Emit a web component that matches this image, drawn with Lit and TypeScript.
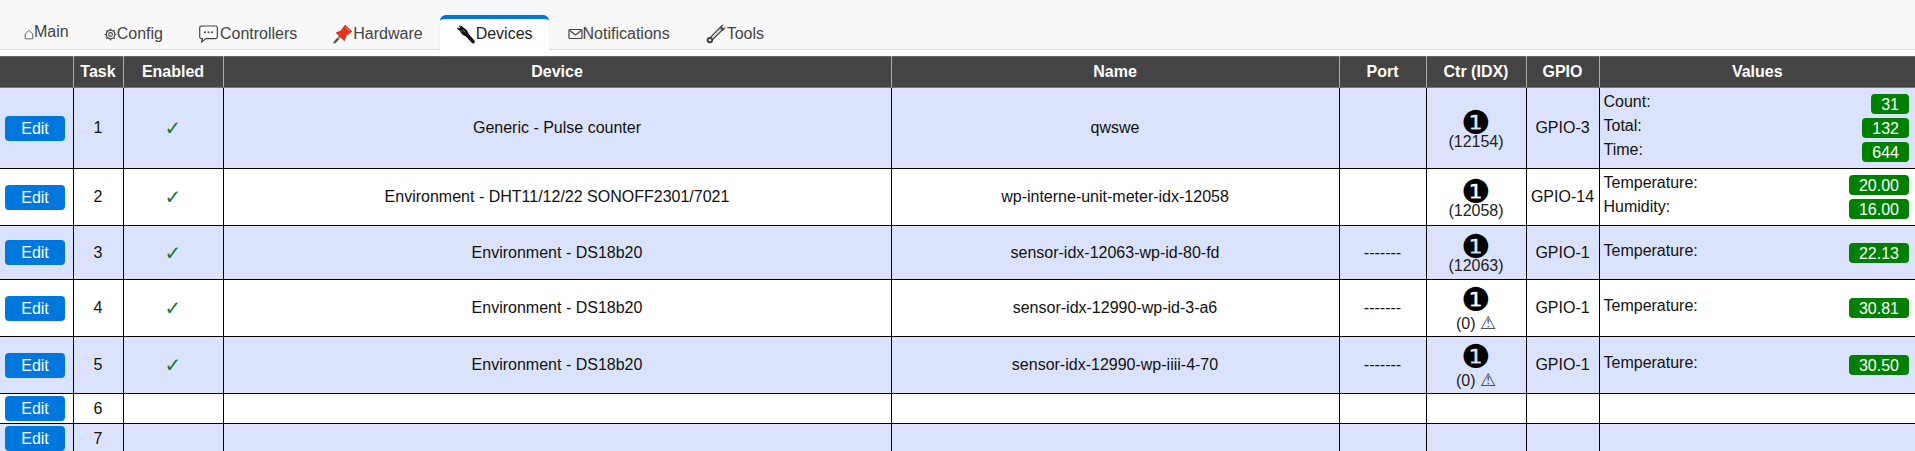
import { LitElement, html, css, svg } from "lit";
import { customElement } from "lit/decorators.js";

interface Row { n: number; device?: string; name?: string; port?: string; idx?: string; warn?: boolean; gpio?: string; vals?: [string, string][]; h: number }

const rows: Row[] = [
  { n: 1, device: "Generic - Pulse counter", name: "qwswe", port: "", idx: "(12154)", gpio: "GPIO-3", vals: [["Count:", "31"], ["Total:", "132"], ["Time:", "644"]], h: 81 },
  { n: 2, device: "Environment - DHT11/12/22 SONOFF2301/7021", name: "wp-interne-unit-meter-idx-12058", port: "", idx: "(12058)", gpio: "GPIO-14", vals: [["Temperature:", "20.00"], ["Humidity:", "16.00"]], h: 57 },
  { n: 3, device: "Environment - DS18b20", name: "sensor-idx-12063-wp-id-80-fd", port: "-------", idx: "(12063)", gpio: "GPIO-1", vals: [["Temperature:", "22.13"]], h: 54 },
  { n: 4, device: "Environment - DS18b20", name: "sensor-idx-12990-wp-id-3-a6", port: "-------", idx: "(0)", warn: true, gpio: "GPIO-1", vals: [["Temperature:", "30.81"]], h: 57 },
  { n: 5, device: "Environment - DS18b20", name: "sensor-idx-12990-wp-iiii-4-70", port: "-------", idx: "(0)", warn: true, gpio: "GPIO-1", vals: [["Temperature:", "30.50"]], h: 57 },
  { n: 6, h: 30 },
  { n: 7, h: 30 },
];

const icons = {
  home: svg`<svg width="10" height="11" viewBox="0 0 10 11"><path d="M1.2 9.8V5L5 1.2 8.8 5v4.8z" fill="none" stroke="#666" stroke-width="1"/></svg>`,
  gear: svg`<svg width="13" height="13" viewBox="0 0 13 13"><circle cx="6.5" cy="6.5" r="1.9" fill="none" stroke="#444" stroke-width="1.1"/><circle cx="6.5" cy="6.5" r="4.3" fill="none" stroke="#444" stroke-width="1.2"/><path d="M6.5 .6v1.6M6.5 10.8v1.6M.6 6.5h1.6M10.8 6.5h1.6M2.3 2.3l1.1 1.1M9.6 9.6l1.1 1.1M2.3 10.7l1.1-1.1M9.6 3.4l1.1-1.1" stroke="#444" stroke-width="1.2"/></svg>`,
  chat: svg`<svg width="20" height="18" viewBox="0 0 20 18"><path d="M2.5 1h14A1.8 1.8 0 0 1 18.3 2.8v9a1.8 1.8 0 0 1-1.8 1.8H7L2.6 17l.9-3.4H2.5A1.8 1.8 0 0 1 .7 11.8v-9A1.8 1.8 0 0 1 2.5 1z" fill="#fff" stroke="#444" stroke-width="1.2"/><circle cx="6" cy="7.3" r="1.05" fill="#444"/><circle cx="9.5" cy="7.3" r="1.05" fill="#444"/><circle cx="13" cy="7.3" r="1.05" fill="#444"/></svg>`,
  pin: svg`<svg width="20" height="20" viewBox="0 0 20 20"><path d="M1.5 18.5 7.5 12" stroke="#999" stroke-width="2.6" stroke-linecap="round"/><path d="M1.5 18.5 5 14.8" stroke="#444" stroke-width="1.6"/><path d="M3.2 8.8 8 7 12 1.2 18.8 7.4 13 11.6 11.4 16.8z" fill="#e6321b" stroke="#a92210" stroke-width=".7"/><path d="M12.8 3.4l3.8 3.8" stroke="#f58a78" stroke-width="1"/></svg>`,
  plug: svg`<svg width="20" height="20" viewBox="0 0 20 20"><path d="M2.2 5.2 5.6 1.8 7 3.2 10.5 5.8 13.8 11.4 11.6 13.6 6.2 10.5 3.8 7z" fill="#111"/><path d="M1.4 3.9 3 5.5M3.4 1.7 5 3.3" stroke="#333" stroke-width="1.6"/><path d="M12.5 12.5 17 17.6" stroke="#111" stroke-width="3.6" stroke-linecap="round"/><path d="M6.6 5.4l3 3M4.8 6.2l2 2" stroke="#888" stroke-width=".9"/></svg>`,
  mail: svg`<svg width="15" height="12" viewBox="0 0 15 12"><rect x="1" y="1.5" width="13" height="9" rx="1" fill="none" stroke="#444" stroke-width="1.2"/><path d="M1.4 2.2 7.5 7l6.1-4.8" fill="none" stroke="#444" stroke-width="1.2"/></svg>`,
  wrench: svg`<svg width="21" height="20" viewBox="0 0 21 20"><path d="M4.5 15.5 15.5 4.5" stroke="#333" stroke-width="4.4"/><path d="M4.5 15.5 15.5 4.5" stroke="#d4d4d4" stroke-width="2.4"/><circle cx="3.9" cy="16.1" r="3.2" fill="#444"/><circle cx="3.9" cy="16.1" r="1.2" fill="#fff"/><path d="M13.6 3.6 15.6 1 17.6.6 16 3 17.6 4.4 19.6 2.8 19 5 16.4 7z" fill="#444"/></svg>`,
};

const tabs = [
  { label: "Main", icon: icons.home, w: 10, cls: "raised" },
  { label: "Config", icon: icons.gear, w: 13, cls: "" },
  { label: "Controllers", icon: icons.chat, w: 21, cls: "" },
  { label: "Hardware", icon: icons.pin, w: 20, cls: "before" },
  { label: "Devices", icon: icons.plug, w: 20, cls: "active" },
  { label: "Notifications", icon: icons.mail, w: 15, cls: "" },
  { label: "Tools", icon: icons.wrench, w: 21, cls: "" },
];

@customElement("app-root")
export class AppRoot extends LitElement {
  static styles = css`
    :host { display: block; height: 451px; overflow: hidden; background: #fff; font-family: "Liberation Sans", Arial, sans-serif; font-size: 16px; color: #000; }
    nav { display: flex; height: 49px; padding-left: 6px; background: #f8f8f8; border-bottom: 1px solid #ddd; box-sizing: content-box; }
    .tab { display: flex; align-items: center; height: 38px; margin: 15px 2px 0; padding: 0 16px; color: #444; box-sizing: border-box; }
    .tab.raised { margin-right: 1px; }
    .tab.raised .lbl { position: relative; top: -2px; }
    .tab.before { margin-right: 1px; }
    .tab.active { height: 41px; margin: 15px 1px 0 0; padding-bottom: 7px; color: #222; background: #fff; border-top: 4px solid #0077dd; border-radius: 6px 6px 0 0; box-shadow: 0 0 1px #ccc; position: relative; z-index: 1; }
    .ic { display: flex; align-items: center; justify-content: center; flex: none; }
    .gap { height: 6px; }
    table { width: 1915px; table-layout: fixed; border-collapse: collapse; }
    th { height: 30px; padding: 0; background: #444; color: #fff; font-weight: bold; font-size: 16px; border: 1px solid #aaa; border-top: 1px solid #666; border-bottom: 1px solid #777; }
    td { padding: 0; text-align: center; border: 1px solid #000; vertical-align: middle; color: #111; line-height: 18px; }
    th:first-child, td:first-child { border-left: 0; }
    th:last-child, td:last-child { border-right: 0; }
    tr.odd td { background: #dbe3fc; }
    .edit { display: block; width: 60px; height: 25px; margin: 0 0 0 5px; line-height: 25px; border-radius: 4px; background: #0077dd; color: #fff; text-align: center; }
    .check { display: inline-block; padding-top: 2px; font-family: "DejaVu Sans", sans-serif; font-size: 20px; color: #1a7a3a; font-weight: bold; line-height: 18px; }
    .ctr { padding-top: 5px; }
    .ctr.warned { padding-top: 5px; }
    .badge { display: block; font-family: "DejaVu Sans", sans-serif; font-size: 33px; line-height: 24px; height: 24px; color: #000; }
    .idx { display: block; margin-top: -2px; line-height: 18px; color: #222; }
    .warned .idx { margin-top: 2px; }
    .warn { font-family: "DejaVu Sans", sans-serif; font-size: 18px; line-height: 18px; color: #333; }
    .vals { display: grid; grid-template-columns: 1fr auto; row-gap: 4px; padding: 0 6px 0 4px; }
    .vl { text-align: left; line-height: 18px; margin-top: -1px; }
    .vr { height: 20px; line-height: 21px; padding: 0 10px; background: #008000; color: #fff; border-radius: 4px; justify-self: end; }
  `;

  render() {
    return html`
      <nav>
        ${tabs.map((t) => html`<div class="tab ${t.cls}"><span class="ic" style="width:${t.w}px">${t.icon}</span><span class="lbl">${t.label}</span></div>`)}
      </nav>
      <div class="gap"></div>
      <table>
        <colgroup>
          <col style="width:73px" /><col style="width:50px" /><col style="width:100px" /><col style="width:668px" /><col style="width:448px" /><col style="width:87px" /><col style="width:100px" /><col style="width:73px" /><col />
        </colgroup>
        <thead><tr><th></th><th>Task</th><th>Enabled</th><th>Device</th><th>Name</th><th>Port</th><th>Ctr (IDX)</th><th>GPIO</th><th>Values</th></tr></thead>
        <tbody>
          ${rows.map((r) => html`
            <tr class=${r.n % 2 ? "odd" : ""} style="height:${r.h}px">
              <td><span class="edit">Edit</span></td>
              <td>${r.n}</td>
              <td>${r.device ? html`<span class="check">✓</span>` : ""}</td>
              <td>${r.device ?? ""}</td>
              <td>${r.name ?? ""}</td>
              <td>${r.port ?? ""}</td>
              <td>${r.idx ? html`<div class="ctr ${r.warn ? "warned" : ""}"><span class="badge">❶</span><span class="idx">${r.idx}${r.warn ? html` <span class="warn">⚠</span>` : ""}</span></div>` : ""}</td>
              <td>${r.gpio ?? ""}</td>
              <td>${r.vals ? html`<div class="vals">${r.vals.map(([l, v]) => html`<span class="vl">${l}</span><span class="vr">${v}</span>`)}</div>` : ""}</td>
            </tr>`)}
        </tbody>
      </table>
    `;
  }
}
